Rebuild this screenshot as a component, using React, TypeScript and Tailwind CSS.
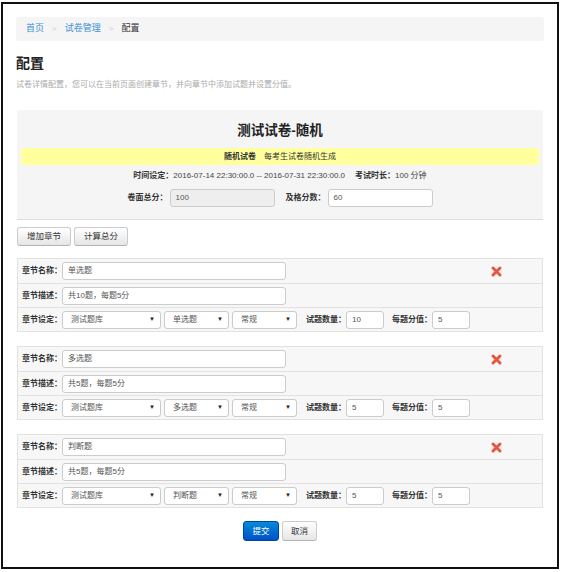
import React from "react";

const FONT = { fontFamily: '"Liberation Sans", "Noto Sans CJK SC", sans-serif' };

function Select({ text, w }: { text: string; w: string }) {
  return (
    <div className={`${w} h-[18px] flex items-center justify-between border border-[#ccc] rounded-[3px] bg-white pl-[8px] pr-[5px] text-[8px] text-[#555]`}>
      <span>{text}</span>
      <span className="text-[6px] text-[#222]">▼</span>
    </div>
  );
}

function Input({ value, w, disabled }: { value: string; w: string; disabled?: boolean }) {
  return (
    <div className={`${w} h-[18px] flex items-center border border-[#ccc] rounded-[3px] ${disabled ? "bg-[#eee]" : "bg-white"} pl-[5px] text-[8px] text-[#555]`}>
      {value}
    </div>
  );
}

function RedX() {
  return (
    <svg width="11" height="11" viewBox="0 0 12 12" className="ml-auto mr-[40px]">
      <path d="M2.2 2.2 L9.8 9.8 M9.8 2.2 L2.2 9.8" stroke="#e8553e" strokeWidth="3.2" strokeLinecap="round" />
    </svg>
  );
}

function Section({ name, desc, type, count, gap }: { name: string; desc: string; type: string; count: string; gap: string }) {
  const label = "w-[40px] text-[8px] font-bold text-[#333] shrink-0";
  return (
    <div className={`${gap} border border-[#e2e2e2] bg-[#f7f7f7]`}>
      <div className="h-[24px] flex items-center pl-[4px]">
        <span className={label}>章节名称：</span>
        <Input value={name} w="w-[224px]" />
        <RedX />
      </div>
      <div className="h-[24px] flex items-center pl-[4px] border-t border-[#e2e2e2]">
        <span className={label}>章节描述：</span>
        <Input value={desc} w="w-[224px]" />
      </div>
      <div className="h-[24px] flex items-center pl-[4px] border-t border-[#e2e2e2]">
        <span className={label}>章节设定：</span>
        <Select text="测试题库" w="w-[99px]" />
        <div className="w-[3px]" />
        <Select text={type} w="w-[65px]" />
        <div className="w-[3px]" />
        <Select text="常规" w="w-[65px]" />
        <span className={`${label} ml-[9px]`}>试题数量：</span>
        <Input value={count} w="w-[38px]" />
        <span className={`${label} ml-[8px]`}>每题分值：</span>
        <Input value="5" w="w-[38px]" />
      </div>
    </div>
  );
}

function Btn({ children, w }: { children: React.ReactNode; w: string }) {
  return (
    <div className={`${w} h-[19px] flex items-center justify-center rounded-[3px] border border-[#ccc] border-b-[#b3b3b3] bg-gradient-to-b from-white to-[#e6e6e6] text-[8.5px] text-[#333]`}>
      {children}
    </div>
  );
}

export default function App() {
  return (
    <div className="w-[562px] h-[572px] bg-white pt-[2px] pl-[1px]" style={FONT}>
      <div className="w-[558px] h-[567px] border-2 border-[#111] px-[13px] pt-[13px]">
        <div className="h-[24px] rounded-[3px] bg-[#f5f5f5] flex items-center pl-[10px] text-[9px]">
          <span className="text-[#3a8fd8]">首页</span>
          <span className="text-[#ccc] mx-[8px] text-[8px]">&gt;</span>
          <span className="text-[#3a8fd8]">试卷管理</span>
          <span className="text-[#ccc] mx-[8px] text-[8px]">&gt;</span>
          <span className="text-[#333]">配置</span>
        </div>
        <div className="mt-[14px] text-[14px] leading-[16px] font-bold text-[#222]">配置</div>
        <div className="mt-[8px] text-[8px] leading-[12px] text-[#aaa]">试卷详情配置，您可以在当前页面创建章节，并向章节中添加试题并设置分值。</div>

        <div className="mt-[19px] mx-[1px] bg-[#f5f5f5] border-b border-[#ddd] pt-[12px] pb-[12px]">
          <div className="text-center text-[13.5px] leading-[18px] font-bold text-[#222]">测试试卷-随机</div>
          <div className="mt-[8px] mx-[4px] h-[17px] bg-[#ffff9e] flex items-center justify-center text-[8px]">
            <span className="font-bold text-[#333]">随机试卷</span>
            <span className="ml-[8px] text-[#333]">每考生试卷随机生成</span>
          </div>
          <div className="mt-[5px] h-[12px] flex items-center justify-center text-[8px] text-[#333]">
            <span className="font-bold">时间设定：</span>
            <span className="text-[8px] text-[#444]">2016-07-14 22:30:00.0 -- 2016-07-31 22:30:00.0</span>
            <span className="font-bold ml-[10px]">考试时长：</span>
            <span className="text-[8px] text-[#444]">100 分钟</span>
          </div>
          <div className="mt-[7px] h-[18px] flex items-center justify-center text-[8px] text-[#333]">
            <span className="font-bold mr-[2px]">卷面总分：</span>
            <Input value="100" w="w-[105px]" disabled />
            <span className="font-bold ml-[11px] mr-[2px]">及格分数：</span>
            <Input value="60" w="w-[105px]" />
          </div>
        </div>

        <div className="mt-[7px] ml-[1px] flex gap-[3px]">
          <Btn w="w-[54px]">增加章节</Btn>
          <Btn w="w-[54px]">计算总分</Btn>
        </div>

        <div className="mx-[1px]">
          <Section name="单选题" desc="共10题，每题5分" type="单选题" count="10" gap="mt-[12px]" />
          <Section name="多选题" desc="共5题，每题5分" type="多选题" count="5" gap="mt-[14px]" />
          <Section name="判断题" desc="共5题，每题5分" type="判断题" count="5" gap="mt-[14px]" />
        </div>

        <div className="mt-[13px] flex justify-center gap-[3px]">
          <div className="w-[36px] h-[20px] flex items-center justify-center rounded-[3px] border border-[#0044aa] bg-gradient-to-b from-[#0a8ad6] to-[#0450c8] text-[8.5px] text-white">提交</div>
          <div className="w-[35px] h-[20px] flex items-center justify-center rounded-[3px] border border-[#ccc] border-b-[#b3b3b3] bg-gradient-to-b from-white to-[#e6e6e6] text-[8.5px] text-[#333]">取消</div>
        </div>
      </div>
    </div>
  );
}
